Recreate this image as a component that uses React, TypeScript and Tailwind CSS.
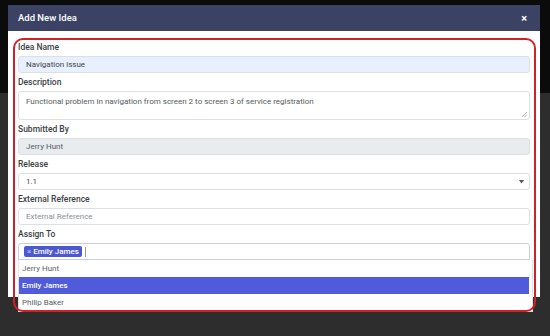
import React from "react";

type Field = {
  label: string;
  kind: "input" | "textarea" | "select" | "multi";
  value?: string;
  placeholder?: string;
  tone?: "autofill" | "disabled" | "plain";
};

const fields: Field[] = [
  { label: "Idea Name", kind: "input", value: "Navigation issue", tone: "autofill" },
  {
    label: "Description",
    kind: "textarea",
    value: "Functional problem in navigation from screen 2 to screen 3 of service registration",
  },
  { label: "Submitted By", kind: "input", value: "Jerry Hunt", tone: "disabled" },
  { label: "Release", kind: "select", value: "1.1" },
  { label: "External Reference", kind: "input", placeholder: "External Reference" },
  { label: "Assign To", kind: "multi" },
];

const people = ["Jerry Hunt", "Emily James", "Philip Baker"];

function Control({ field }: { field: Field }) {
  if (field.kind === "textarea") {
    return (
      <div className="relative h-[29px] rounded-[3px] border border-[#dcdfe4] bg-white px-[7px] pt-[4px] text-[8px] leading-[11px] text-[#555b61]">
        {field.value}
        <svg className="absolute bottom-[2px] right-[2px]" width="6" height="6" viewBox="0 0 6 6">
          <path d="M1 6 L6 1 M3.5 6 L6 3.5" stroke="#9a9a9a" strokeWidth="0.8" />
        </svg>
      </div>
    );
  }

  if (field.kind === "select") {
    return (
      <div className="flex h-[17px] items-center justify-between rounded-[3px] border border-[#dcdfe4] bg-white pl-[7px] pr-[5px] text-[8px] text-[#3f4448]">
        <span>{field.value}</span>
        <svg width="5" height="4" viewBox="0 0 5 4">
          <path d="M0 0 H5 L2.5 3.5 Z" fill="#555" />
        </svg>
      </div>
    );
  }

  if (field.kind === "multi") {
    return (
      <div className="relative">
        <div className="flex h-[17px] items-center gap-[2px] rounded-t-[3px] border border-[#c9cbee] bg-white pl-[5px]">
          <span className="flex h-[11px] items-center gap-[2px] rounded-[2px] bg-[#4c58d2] px-[3px] text-[8px] font-medium text-white">
            <span className="font-normal text-[#c7ccff]">×</span>
            Emily James
          </span>
          <span className="ml-[1px] h-[10px] w-px bg-[#9a9a9a]" />
        </div>
        <div className="absolute left-0 right-[-3px] top-[17px] z-10 border-x border-b border-[#e2e2e2] bg-white">
          {people.map((name) => (
            <div
              key={name}
              className={
                name === "Emily James"
                  ? "mr-[3px] flex h-[17px] items-center bg-[#4f5bdb] px-[3px] text-[8px] font-medium text-white"
                  : "flex h-[17px] items-center px-[3px] text-[8px] text-[#5a5f64]"
              }
            >
              {name}
            </div>
          ))}
        </div>
      </div>
    );
  }

  const tone =
    field.tone === "autofill"
      ? "bg-[#e8f0fe] text-[#3f4448]"
      : field.tone === "disabled"
        ? "bg-[#e9ecef] text-[#555b61]"
        : "bg-white text-[#8a9096]";

  return (
    <div
      className={`flex h-[17px] items-center rounded-[3px] border border-[#dcdfe4] px-[7px] text-[8px] ${tone}`}
    >
      {field.value || field.placeholder}
    </div>
  );
}

export default function App() {
  return (
    <div
      className="relative h-[336px] w-[550px] overflow-hidden bg-[#2d2d2d]"
      style={{ fontFamily: "Roboto, 'Liberation Sans', sans-serif" }}
    >
      <div className="h-[93px] bg-[#0b0b0c]" />

      <div className="absolute left-[8px] top-[5px] h-[292px] w-[532px] bg-white">
        <div className="flex h-[26px] items-center justify-between bg-[#3b4264] pl-[10px] pr-[13px]">
          <span className="text-[9.5px] font-medium text-white">Add New Idea</span>
          <span className="text-[11px] font-bold leading-none text-white">×</span>
        </div>

        <div className="flex flex-col gap-[4px] px-[10px] pt-[11px]">
          {fields.map((field) => (
            <div key={field.label} className="flex flex-col gap-[3px]">
              <label className="h-[11px] text-[8.5px] font-medium leading-[11px] text-[#3a3f44]">
                {field.label}
              </label>
              <Control field={field} />
            </div>
          ))}
        </div>
      </div>

      <div className="pointer-events-none absolute left-[13px] top-[38px] z-20 h-[274px] w-[523px] rounded-[10px] border-2 border-[#cf2129]" />
    </div>
  );
}
